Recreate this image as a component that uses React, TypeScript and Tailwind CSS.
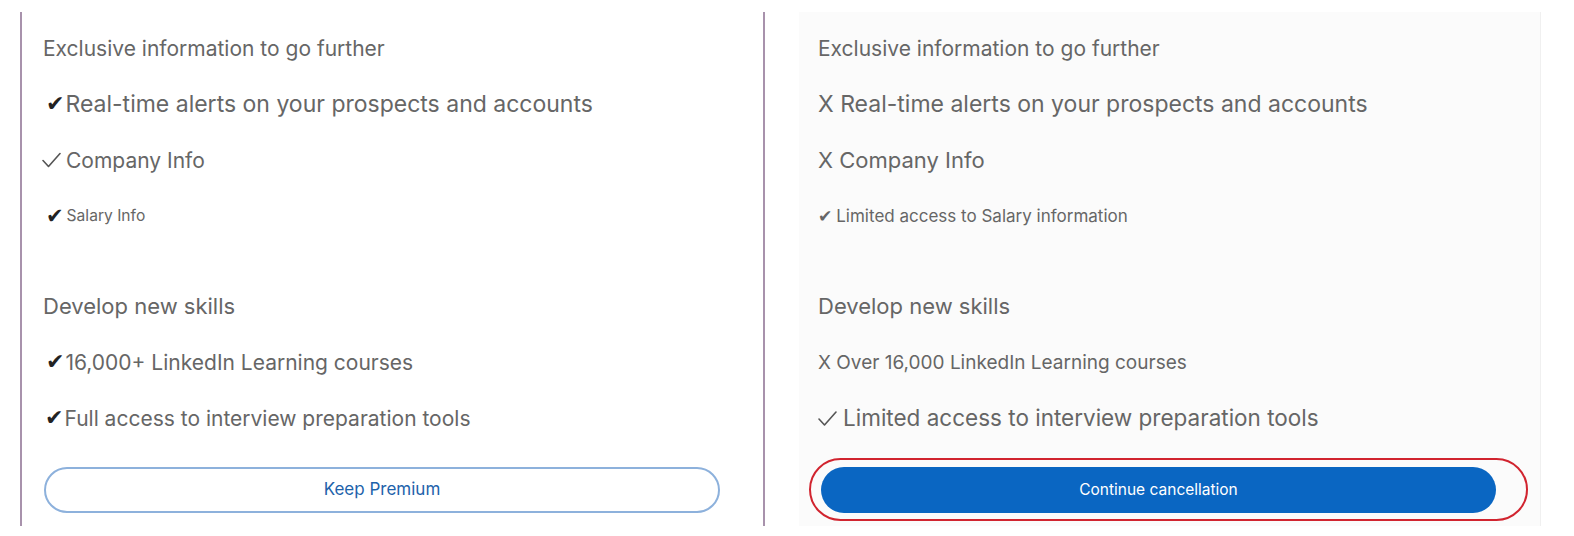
import React from 'react';

type Row = {
    mark?: string;
    markClass?: string;
    thin?: boolean;
    text: string;
    size: string;
};

const leftTop: Row[] = [
    { text: 'Exclusive information to go further', size: 'text-[21px]' },
    { mark: '✔', markClass: 'text-[#222] text-[22px] mr-[1px] ml-[3px]', text: 'Real-time alerts on your prospects and accounts', size: 'text-[23px]' },
    { thin: true, markClass: 'w-[19px] h-[16px] mr-[5px] -ml-[1px]', text: 'Company Info', size: 'text-[21px]' },
    { mark: '✔', markClass: 'text-[#222] text-[21px] mr-[3px] ml-[3px]', text: 'Salary Info', size: 'text-[15.6px]' },
];

const leftBottom: Row[] = [
    { text: 'Develop new skills', size: 'text-[22px]' },
    { mark: '✔', markClass: 'text-[#222] text-[22px] mr-[1px] ml-[3px]', text: '16,000+ LinkedIn Learning courses', size: 'text-[21px]' },
    { mark: '✔', markClass: 'text-[#222] text-[22px] mr-[1px] ml-[2px]', text: 'Full access to interview preparation tools', size: 'text-[21px]' },
];

const rightTop: Row[] = [
    { text: 'Exclusive information to go further', size: 'text-[21px]' },
    { text: 'X Real-time alerts on your prospects and accounts', size: 'text-[23px]' },
    { text: 'X Company Info', size: 'text-[22px]' },
    { mark: '✔', markClass: 'text-[#666] text-[17px] mr-[4px]', text: 'Limited access to Salary information', size: 'text-[17px]' },
];

const rightBottom: Row[] = [
    { text: 'Develop new skills', size: 'text-[22px]' },
    { text: 'X Over 16,000 LinkedIn Learning courses', size: 'text-[19px]' },
    { thin: true, markClass: 'w-[19px] h-[17px] mr-[6px] ml-0', text: 'Limited access to interview preparation tools', size: 'text-[22.5px]' },
];

const ThinCheck = ({ className }: { className?: string }) => (
    <svg viewBox="0 0 19 16" className={className} fill="none">
        <path d="M1 8.5 L6.5 14.5 L18 1.5" stroke="#555" strokeWidth="1.6" strokeLinecap="round" strokeLinejoin="round" />
    </svg>
);

const Line = ({ row }: { row: Row }) => (
    <div className="h-14 flex items-center">
        {row.thin && <ThinCheck className={`shrink-0 ${row.markClass}`} />}
        {row.mark && (
            <span className={`font-['DejaVu_Sans',sans-serif] leading-none ${row.markClass}`}>{row.mark}</span>
        )}
        <span className={`${row.size} text-[#666] leading-none`}>{row.text}</span>
    </div>
);

export default function App() {
    return (
        <div className="w-[1574px] h-[536px] bg-white flex items-start pt-[12px] font-['Inter',sans-serif]">
            {/* Premium panel */}
            <div className="ml-[20px] w-[745px] h-[514px] border-x-[2px] border-[#a892ac] pl-[21px] pt-[8px] flex flex-col">
                {leftTop.map((r, i) => <Line key={i} row={r} />)}
                <div className="h-[34px]" />
                {leftBottom.map((r, i) => <Line key={i} row={r} />)}
                <button
                    type="button"
                    className="mt-[21px] h-[46px] w-[676px] ml-[1px] rounded-full border-[2px] border-[#8db1dc] bg-white text-[#1e63ab] text-[17px]"
                >
                    Keep Premium
                </button>
            </div>

            {/* Free panel */}
            <div className="ml-[34px] w-[742px] h-[514px] bg-[#fbfbfb] border-r border-[#f0f0f0] pl-[19px] pt-[8px] flex flex-col">
                {rightTop.map((r, i) => <Line key={i} row={r} />)}
                <div className="h-[34px]" />
                {rightBottom.map((r, i) => <Line key={i} row={r} />)}
                <div className="mt-[12px] -ml-[9px] w-[719px] h-[63px] rounded-[32px] border-[2px] border-[#d1242f] flex items-center pl-[10px]">
                    <button
                        type="button"
                        className="h-[46px] w-[675px] rounded-full bg-[#0a66c2] text-white text-[15.5px]"
                    >
                        Continue cancellation
                    </button>
                </div>
            </div>
        </div>
    );
}
